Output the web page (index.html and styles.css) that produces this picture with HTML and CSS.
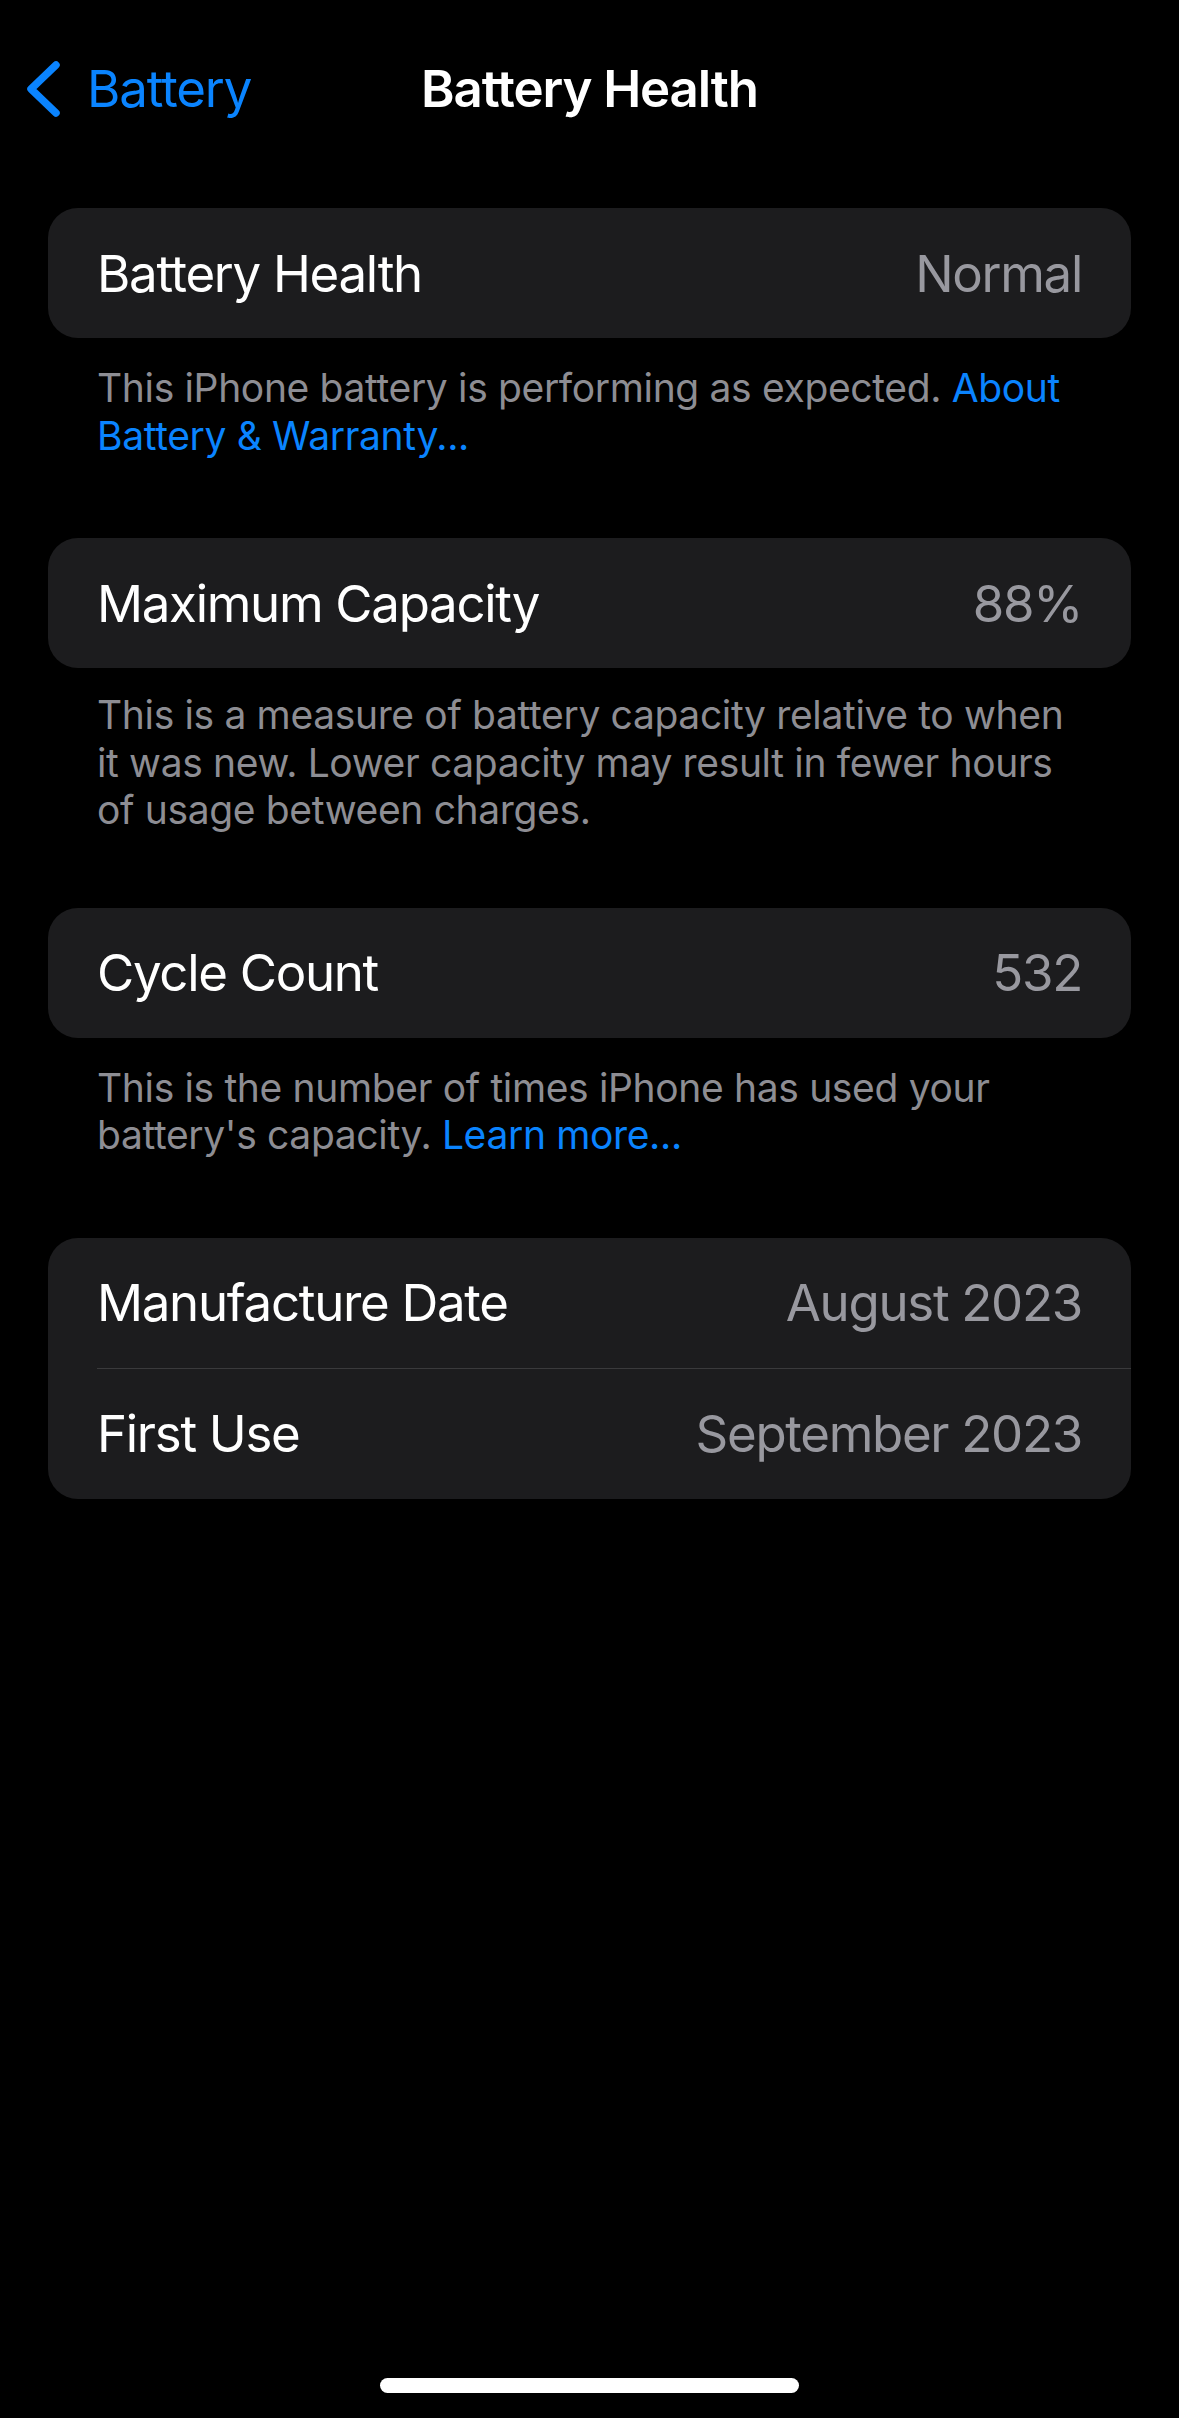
FILE: index.html
```html
<!DOCTYPE html>
<html lang="en">
<head>
    <meta charset="UTF-8">
    <meta name="viewport" content="width=device-width, initial-scale=1.0">
    <title>Battery Health</title>
    <link rel="stylesheet" href="styles.css">
</head>
<body>

<div class="screen">
    <div class="nav">
        <a class="back" href="#">
            <svg class="chevron" width="36" height="56" viewBox="0 0 36 56">
                <path d="M31 4 L6 28 L31 52" fill="none" stroke="#0a84ff" stroke-width="7.5" stroke-linecap="round" stroke-linejoin="round"/>
            </svg>
            <span>Battery</span>
        </a>
        <div class="title">Battery Health</div>
        <div></div>
    </div>

    <div class="content">
        <div class="card">
            <div class="row">
                <span class="label">Battery Health</span>
                <span class="value">Normal</span>
            </div>
        </div>
        <p class="footer">This iPhone battery is performing as expected. <a href="#">About Battery &amp; Warranty...</a></p>

        <div class="card">
            <div class="row">
                <span class="label">Maximum Capacity</span>
                <span class="value">88%</span>
            </div>
        </div>
        <p class="footer footer-long">This is a measure of battery capacity relative to when it was new. Lower capacity may result in fewer hours of usage between charges.</p>

        <div class="card">
            <div class="row">
                <span class="label">Cycle Count</span>
                <span class="value">532</span>
            </div>
        </div>
        <p class="footer">This is the number of times iPhone has used your battery's capacity. <a href="#">Learn more...</a></p>

        <div class="card">
            <div class="row">
                <span class="label">Manufacture Date</span>
                <span class="value">August 2023</span>
            </div>
            <div class="row">
                <span class="label">First Use</span>
                <span class="value">September 2023</span>
            </div>
        </div>
    </div>

    <div class="home-indicator"></div>
</div>

</body>
</html>
```

FILE: styles.css
```css
body {
    margin: 0;
    background-color: #000;
    color: #fff;
    font-family: Inter, "Noto Sans", sans-serif;
}

a {
    color: #0a84ff;
    text-decoration: none;
}

.screen {
    display: flex;
    flex-direction: column;
    min-height: 2418px;
}

.nav {
    display: grid;
    grid-template-columns: 1fr auto 1fr;
    align-items: center;
    height: 177px;
    padding: 0 25px;
}

.back {
    display: flex;
    align-items: center;
    gap: 26px;
    font-size: 51px;
    letter-spacing: -1.1px;
}

.chevron {
    display: block;
}

.title {
    font-size: 51px;
    font-weight: 600;
    letter-spacing: -1.1px;
}

.content {
    padding: 31px 48px 0;
}

.card {
    background-color: #1c1c1e;
    border-radius: 30px;
    overflow: hidden;
}

.row {
    display: flex;
    justify-content: space-between;
    align-items: center;
    height: 130px;
    padding: 0 49px;
    font-size: 51px;
    letter-spacing: -1.3px;
}

.row + .row {
    height: 131px;
    box-shadow: inset 0 1px 0 #3a3a3c;
    margin-left: 49px;
    padding-left: 0;
}

.value {
    color: #98989f;
}

.footer {
    margin: 0 0 79px;
    padding: 26px 49px 0;
    font-size: 39px;
    line-height: 47.5px;
    color: #8d8d93;
    letter-spacing: -0.35px;
}

.footer-long {
    margin-bottom: 74px;
    padding-top: 23px;
}

.home-indicator {
    align-self: center;
    width: 419px;
    height: 15px;
    margin-top: auto;
    margin-bottom: 25px;
    border-radius: 8px;
    background-color: #fff;
}
```
